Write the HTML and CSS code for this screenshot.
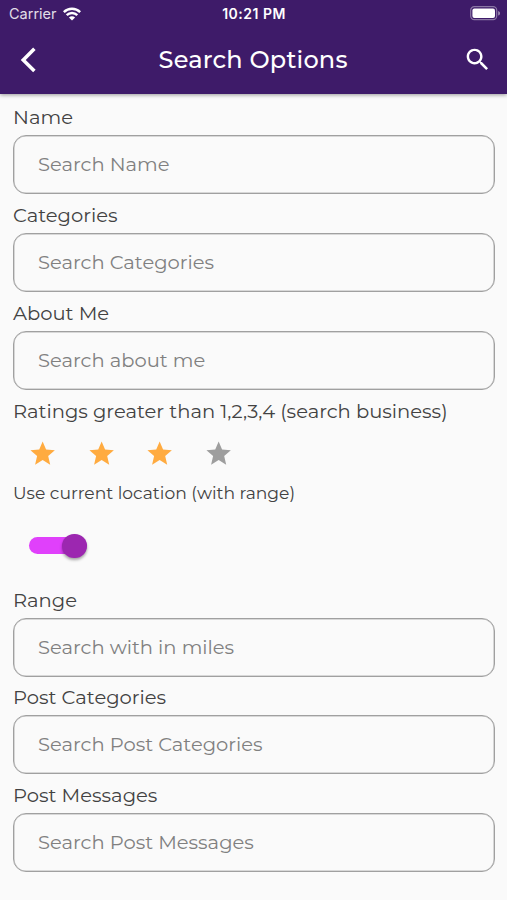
FILE: index.html
```html
<!DOCTYPE html>
<html lang="en">
<head>
    <meta charset="UTF-8">
    <meta name="viewport" content="width=device-width, initial-scale=1.0">
    <title>Search Options</title>
    <link rel="stylesheet" href="styles.css">
</head>
<body>
    <header class="header">
        <div class="status-bar">
            <div class="carrier">
                <span class="carrier-name">Carrier</span>
                <svg class="wifi" width="18" height="14" viewBox="0 0 18 14" fill="none" stroke="#fff" stroke-width="2.5">
                    <path d="M0.8 5.1C5.4 0.6 12.6 0.6 17.2 5.1"/>
                    <path d="M3.7 8.2C6.7 5.3 11.3 5.3 14.3 8.2"/>
                    <path d="M9 13.6L5.9 10.5C7.6 8.9 10.4 8.9 12.1 10.5Z" fill="#fff" stroke="none"/>
                </svg>
            </div>
            <span class="time">10:21 PM</span>
            <svg class="battery" width="31" height="15" viewBox="0 0 31 15">
                <rect x="0.7" y="0.7" width="26" height="13" rx="3.6" fill="none" stroke="#fff" stroke-opacity="0.4" stroke-width="1.2"/>
                <rect x="2.4" y="2.4" width="22.6" height="9.6" rx="2" fill="#fff"/>
                <path d="M28.2 5C30.6 5.8 30.6 8.8 28.2 9.6Z" fill="#fff" fill-opacity="0.5"/>
            </svg>
        </div>
        <div class="nav-bar">
            <button class="icon-button" aria-label="Back">
                <svg width="30" height="30" viewBox="0 0 24 24" fill="#fff">
                    <path d="M18.1 4L16.1 2L6.2 11.9L16.1 21.8L18.1 19.8L10.2 11.9Z"/>
                </svg>
            </button>
            <h1 class="title">Search Options</h1>
            <button class="icon-button" aria-label="Search">
                <svg width="29.3" height="29.3" viewBox="0 0 24 24" fill="#fff">
                    <path d="M15.5 14h-.79l-.28-.27C15.41 12.59 16 11.11 16 9.5 16 5.91 13.09 3 9.5 3S3 5.91 3 9.5 5.91 16 9.5 16c1.61 0 3.09-.59 4.23-1.57l.27.28v.79l5 4.99L20.49 19l-4.99-5zm-6 0C7.01 14 5 11.99 5 9.5S7.01 5 9.5 5 14 7.01 14 9.5 11.99 14 9.5 14z"/>
                </svg>
            </button>
        </div>
    </header>

    <main class="content">
        <div class="field">
            <label class="label" for="name">Name</label>
            <input type="text" class="input" id="name" placeholder="Search Name">
        </div>
        <div class="field">
            <label class="label" for="categories">Categories</label>
            <input type="text" class="input" id="categories" placeholder="Search Categories">
        </div>
        <div class="field">
            <label class="label" for="about">About Me</label>
            <input type="text" class="input" id="about" placeholder="Search about me">
        </div>

        <div class="ratings">
            <span class="label">Ratings greater than 1,2,3,4 (search business)</span>
            <div class="stars">
                <svg class="star" viewBox="0 0 24 24"><path d="M12 17.27L18.18 21l-1.64-7.03L22 9.24l-7.19-.61L12 2 9.19 8.63 2 9.24l5.46 4.73L5.82 21z"/></svg>
                <svg class="star" viewBox="0 0 24 24"><path d="M12 17.27L18.18 21l-1.64-7.03L22 9.24l-7.19-.61L12 2 9.19 8.63 2 9.24l5.46 4.73L5.82 21z"/></svg>
                <svg class="star" viewBox="0 0 24 24"><path d="M12 17.27L18.18 21l-1.64-7.03L22 9.24l-7.19-.61L12 2 9.19 8.63 2 9.24l5.46 4.73L5.82 21z"/></svg>
                <svg class="star star-off" viewBox="0 0 24 24"><path d="M12 17.27L18.18 21l-1.64-7.03L22 9.24l-7.19-.61L12 2 9.19 8.63 2 9.24l5.46 4.73L5.82 21z"/></svg>
            </div>
        </div>

        <div class="location">
            <span class="location-label">Use current location (with range)</span>
            <div class="switch">
                <div class="switch-thumb"></div>
            </div>
        </div>

        <div class="field">
            <label class="label" for="range">Range</label>
            <input type="text" class="input" id="range" placeholder="Search with in miles">
        </div>
        <div class="field">
            <label class="label" for="post-categories">Post Categories</label>
            <input type="text" class="input" id="post-categories" placeholder="Search Post Categories">
        </div>
        <div class="field">
            <label class="label" for="post-messages">Post Messages</label>
            <input type="text" class="input" id="post-messages" placeholder="Search Post Messages">
        </div>
    </main>
</body>
</html>
```

FILE: styles.css
```css
* {
    box-sizing: border-box;
}
body {
    margin: 0;
    height: 900px;
    overflow: hidden;
    background-color: #fafafa;
    color: #424242;
    font-family: Montserrat, Inter, sans-serif;
}
.header {
    height: 94px;
    background-color: #3e1b69;
    color: white;
    box-shadow: 0 1px 4px rgba(0,0,0,0.4);
}
.status-bar {
    display: grid;
    grid-template-columns: 1fr auto 1fr;
    align-items: center;
    height: 27px;
    padding: 0 6px 0 9px;
    font-family: Inter, sans-serif;
}
.carrier {
    display: flex;
    align-items: center;
    gap: 6px;
}
.carrier-name {
    font-size: 14.5px;
    opacity: 0.85;
}
.time {
    margin-right: 2px;
    font-size: 14px;
    font-weight: 600;
    letter-spacing: 0.5px;
}
.battery {
    justify-self: end;
}
.nav-bar {
    display: flex;
    align-items: center;
    justify-content: space-between;
    height: 65px;
    padding: 0 15px 0 12.5px;
}
.title {
    margin: 0;
    padding-left: 1px;
    font-size: 24px;
    font-weight: 500;
    letter-spacing: 0.2px;
}
.icon-button {
    display: flex;
    padding: 0;
    border: none;
    background: none;
    cursor: pointer;
}
.content {
    padding: 2px 12px 0 13px;
}
.field {
    height: 97.75px;
    padding-top: 9.4px;
}
.label {
    display: block;
    margin-bottom: 5.9px;
    font-size: 19.55px;
    line-height: 24px;
    white-space: nowrap;
}
.input {
    display: block;
    width: 100%;
    height: 59px;
    padding: 0 24px 1px;
    border: 1px solid #a0a0a0;
    border-radius: 13px;
    background: none;
    font-family: inherit;
    font-size: 19.5px;
    box-shadow: inset 0 0 0 0.5px #b5b5b5;
}
.input::placeholder {
    color: #808080;
}
.ratings {
    height: 87px;
    padding-top: 9.4px;
}
.stars {
    display: flex;
    gap: 29.3px;
    padding: 10px 0 0 15px;
}
.star {
    width: 29.3px;
    height: 29.3px;
    fill: #ffab40;
}
.star-off {
    fill: #9e9e9e;
}
.location {
    height: 102px;
    padding-top: 6px;
}
.location-label {
    display: block;
    font-size: 17.15px;
    line-height: 22px;
}
.switch {
    display: flex;
    align-items: center;
    justify-content: flex-end;
    width: 57.5px;
    height: 17px;
    margin: 33px 0 0 16px;
    border-radius: 9px;
    background-color: #e040fb;
}
.switch-thumb {
    flex: none;
    width: 24.5px;
    height: 24.5px;
    border-radius: 50%;
    background-color: #9c27b0;
    box-shadow: 0 2px 3px rgba(0,0,0,0.35);
}
```
